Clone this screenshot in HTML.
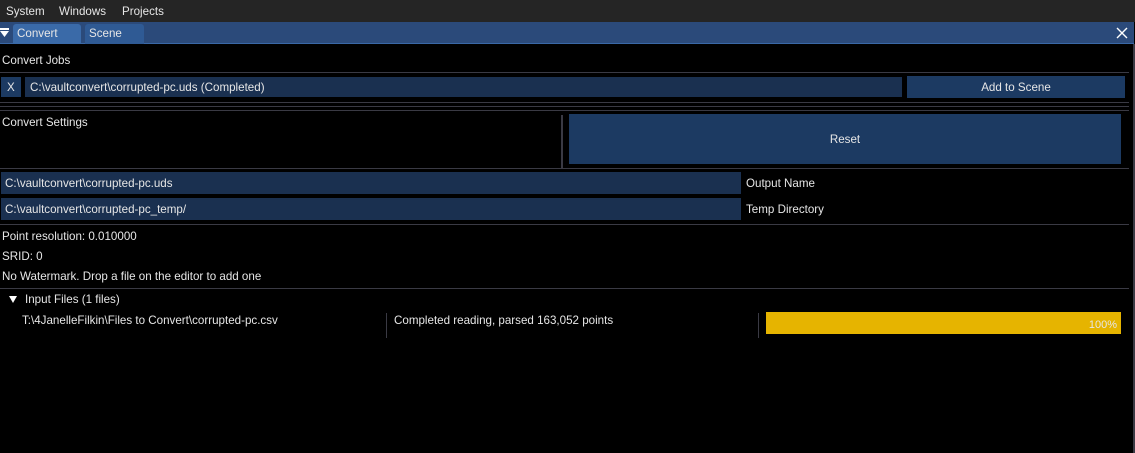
<!DOCTYPE html>
<html><head><style>
body{margin:0;width:1135px;height:453px;background:#000;overflow:hidden;position:relative;font-family:"Liberation Sans",sans-serif;font-size:11.6px;color:#e6e6e6}
div{position:absolute;box-sizing:border-box}
.t{white-space:nowrap;line-height:14px}
.ln{height:1px;background:#3a3a44}
.in{background:#1a3050}
.bt{background:#1c3a62;text-align:center}
</style></head><body>
<div style="left:0;top:0;width:1135px;height:22px;background:#252525"></div>
<div class="t" style="left:6px;top:5px">System</div>
<div class="t" style="left:59px;top:5px">Windows</div>
<div class="t" style="left:122px;top:5px">Projects</div>
<div style="left:0;top:22px;width:1134px;height:22px;background:#2b4a7a"></div>
<div style="left:0;top:43px;width:1134px;height:1px;background:#3a68a6"></div>
<svg style="position:absolute;left:0;top:28px" width="10" height="10"><rect x="0" y="0" width="9" height="2" fill="#fff"/><polygon points="0,3 9,3 4.5,9" fill="#fff"/></svg>
<div style="left:13px;top:24px;width:68px;height:20px;background:#3a6aa8;border-radius:3px 3px 0 0"></div>
<div class="t" style="left:17px;top:27px">Convert</div>
<div style="left:85px;top:24px;width:59px;height:20px;background:#2f5a94;border-radius:3px 3px 0 0"></div>
<div class="t" style="left:89px;top:27px">Scene</div>
<svg style="position:absolute;left:1116px;top:27px" width="12" height="12"><path d="M1 1L11 11M11 1L1 11" stroke="#fff" stroke-width="1.4"/></svg>
<div style="left:1133px;top:44px;width:2px;height:409px;background:#3a3a44"></div>
<div class="t" style="left:2px;top:54px">Convert Jobs</div>
<div class="ln" style="left:0;top:72px;width:1129px"></div>
<div class="in" style="left:1px;top:77px;width:20px;height:20px;background:#1c3a62"></div>
<div class="t" style="left:7px;top:81px">X</div>
<div class="in" style="left:25px;top:77px;width:877px;height:20px"></div>
<div class="t" style="left:30px;top:81px">C:\vaultconvert\corrupted-pc.uds (Completed)</div>
<div class="bt" style="left:907px;top:76px;width:218px;height:22px"></div>
<div class="t" style="left:907px;top:81px;width:218px;text-align:center">Add to Scene</div>
<div class="ln" style="left:0;top:102px;width:1129px"></div>
<div class="ln" style="left:0;top:106px;width:1129px"></div>
<div class="ln" style="left:0;top:110px;width:1129px"></div>
<div class="t" style="left:2px;top:116px">Convert Settings</div>
<div style="left:561px;top:115px;width:2px;height:53px;background:#3a3a44"></div>
<div class="bt" style="left:569px;top:114px;width:552px;height:50px"></div>
<div class="t" style="left:569px;top:133px;width:552px;text-align:center">Reset</div>
<div class="ln" style="left:0;top:168px;width:1129px"></div>
<div class="in" style="left:1px;top:172px;width:740px;height:22px"></div>
<div class="t" style="left:5px;top:177px">C:\vaultconvert\corrupted-pc.uds</div>
<div class="t" style="left:746px;top:177px">Output Name</div>
<div class="in" style="left:1px;top:198px;width:740px;height:22px"></div>
<div class="t" style="left:5px;top:203px">C:\vaultconvert\corrupted-pc_temp/</div>
<div class="t" style="left:746px;top:203px">Temp Directory</div>
<div class="ln" style="left:0;top:224px;width:1129px"></div>
<div class="t" style="left:2px;top:230px">Point resolution: 0.010000</div>
<div class="t" style="left:2px;top:250px">SRID: 0</div>
<div class="t" style="left:2px;top:270px">No Watermark. Drop a file on the editor to add one</div>
<div class="ln" style="left:0;top:288px;width:1129px"></div>
<svg style="position:absolute;left:9px;top:296px" width="8" height="8"><polygon points="0,0 8,0 4,7" fill="#fff"/></svg>
<div class="t" style="left:25px;top:293px">Input Files (1 files)</div>
<div class="t" style="left:22px;top:314px">T:\4JanelleFilkin\Files to Convert\corrupted-pc.csv</div>
<div style="left:386px;top:313px;width:1px;height:25px;background:#3a3a44"></div>
<div class="t" style="left:394px;top:314px">Completed reading, parsed 163,052 points</div>
<div style="left:758px;top:313px;width:1px;height:25px;background:#3a3a44"></div>
<div style="left:766px;top:312px;width:355px;height:22px;background:#e6b400"></div>
<div class="t" style="left:766px;top:318px;width:351px;text-align:right;font-size:11px">100%</div>
</body></html>
